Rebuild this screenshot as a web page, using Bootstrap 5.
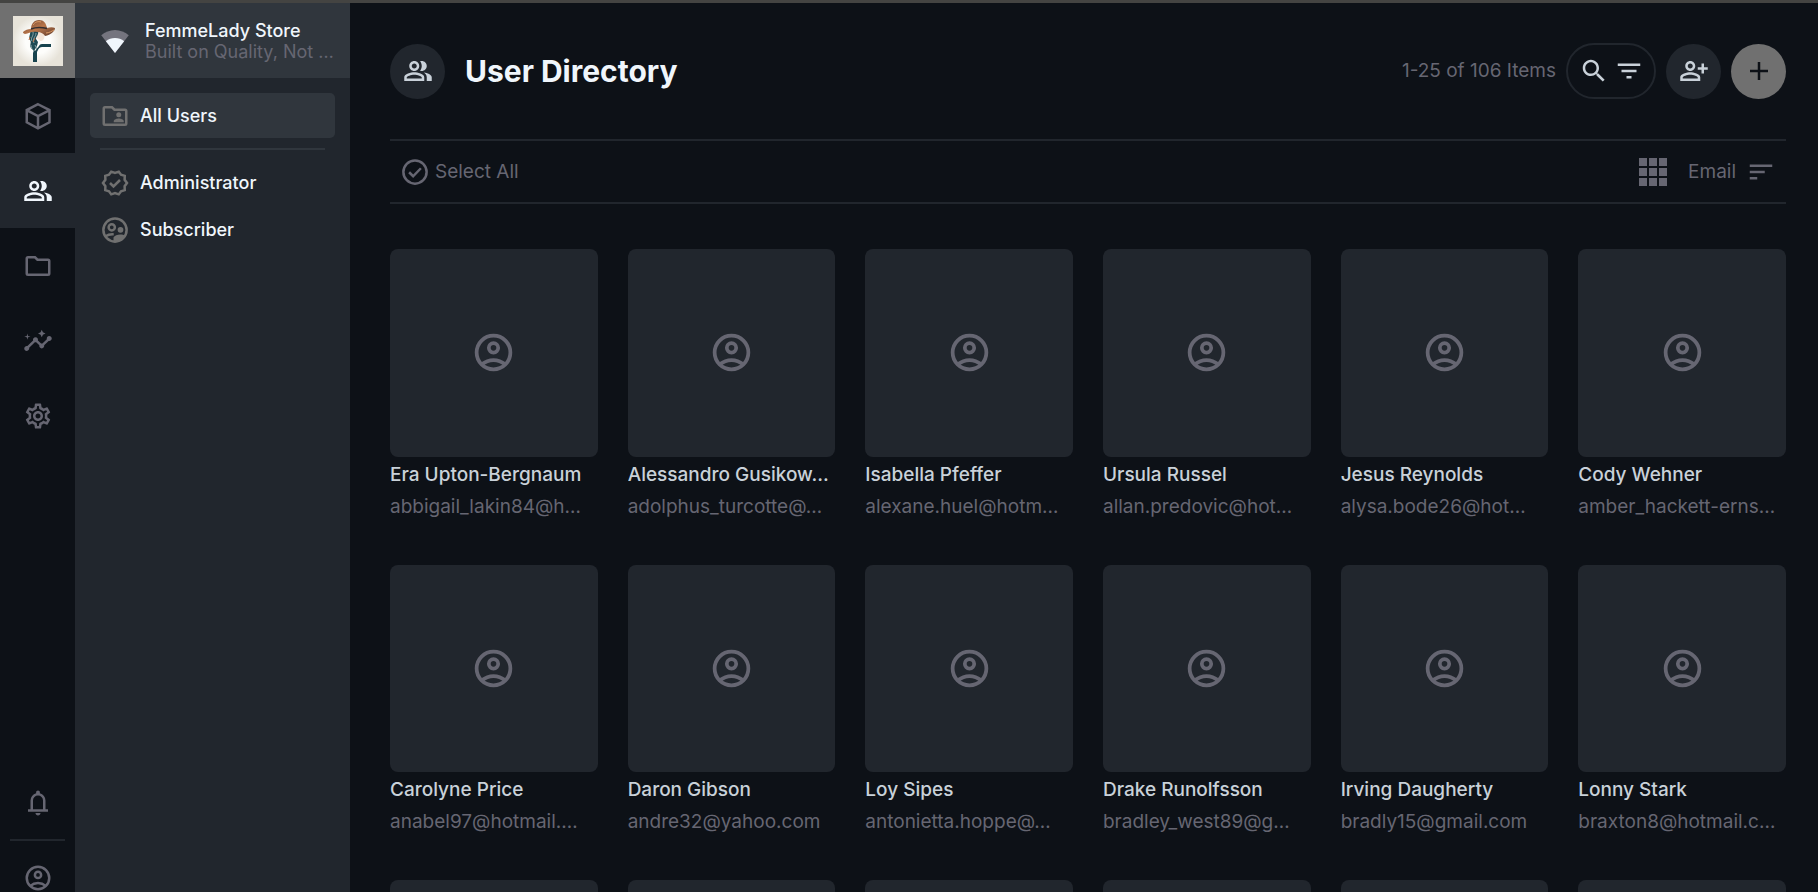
<!DOCTYPE html>
<html lang="en" data-bs-theme="dark">
<head>
<meta charset="utf-8">
<meta name="viewport" content="width=device-width, initial-scale=1">
<title>User Directory</title>
<link href="https://cdn.jsdelivr.net/npm/bootstrap@5.3.0/dist/css/bootstrap.min.css" rel="stylesheet">
<style>
:root { --page: #0d1117; --panel: #21262d; --raised: #30363d; --dim: #666672; --warm: #707070; --ink: #f0f6fc; --soft: #c9d1d9; }
body { background: var(--page); color: var(--soft); font-family: Inter, "Liberation Sans", sans-serif; font-size: 19px; line-height: 24px; border-top: 3px solid #444442; }
.ico { width: 30px; height: 30px; fill: currentColor; flex: none; display: block; }
.ln { fill: none; stroke: currentColor; stroke-width: 2; }
.bare { background: none; border: 0; padding: 0; color: inherit; }
.dim { color: var(--dim); }
.modules { width: 75px; background: var(--page); }
.module { height: 75px; color: var(--dim); }
.module.current { background: var(--panel); color: var(--ink); }
.module.brand { background: var(--warm); }
.module.account { height: 52px; padding-top: 23px; overflow: hidden; }
.module-rule { height: 2px; background: var(--panel); margin: -1px 10px; }
.sidenav { width: 275px; background: var(--panel); }
.project { height: 75px; background: var(--raised); padding: 0 15px 0 25px; gap: 15px; }
.project-name { color: var(--ink); font-weight: 500; line-height: 21px; font-size: 18px; }
.tagline { color: var(--dim); line-height: 21px; font-size: 18px; }
.side-list { padding: 15px; }
.side-item { height: 45px; border-radius: 5px; padding: 0 10px; gap: 10px; color: var(--ink); font-weight: 500; font-size: 18px; margin-bottom: 2px; }
.side-item svg { color: var(--warm); }
.side-item.current { background: var(--raised); margin-bottom: 0; }
.side-rule { height: 2px; background: var(--raised); margin: 10px; }
.content { padding: 40px 32px 0 40px; }
.round { width: 55px; height: 55px; border-radius: 50%; background: var(--panel); color: var(--soft); }
.round.add { background: var(--warm); color: var(--page); }
.title { font-size: 30px; font-weight: 700; line-height: 38px; color: var(--ink); }
.actions { gap: 10px; }
.search-pill { height: 56px; border: 2px solid var(--panel); border-radius: 28px; padding: 0 10px 0 11px; gap: 5px; }
.tools { height: 65px; border-top: 2px solid var(--panel); border-bottom: 2px solid var(--panel); margin: 40px 0 45px; padding: 0 10px; }
.select-all { gap: 5px; }
.sort { gap: 10px; }
.directory { --bs-gutter-x: 30px; }
.directory > .col { margin-bottom: 42px; }
.tile { aspect-ratio: 1; background: var(--panel); border-radius: 8px; color: var(--dim); margin-bottom: 2px; }
.tile svg { width: 45px; height: 45px; }
.person { line-height: 32px; white-space: nowrap; overflow: hidden; }
.person.who { color: var(--soft); font-weight: 500; }
</style>
</head>
<body class="vh-100 overflow-hidden d-flex">
<svg class="d-none" aria-hidden="true">
  <symbol id="i-account" viewBox="0 0 24 24"><g class="ln"><circle cx="12" cy="12" r="9"/><circle cx="12" cy="9.500" r="2.500"/><path d="M5.800 18.300C7.600 16.800 9.700 16 12 16s4.400.8 6.200 2.300"/></g></symbol>
  <symbol id="i-people" viewBox="0 0 24 24"><path d="M16.670 13.130C18.040 14.060 19 15.320 19 17v3h4v-3c0-2.180-3.570-3.470-6.330-3.870zM15 12c2.210 0 4-1.790 4-4s-1.790-4-4-4c-.47 0-.91.1-1.330.24C14.500 5.270 15 6.580 15 8s-.5 2.730-1.330 3.760c.42.14.86.24 1.330.24z"/><path fill-rule="evenodd" d="M9 12c2.210 0 4-1.790 4-4s-1.790-4-4-4-4 1.790-4 4 1.790 4 4 4zm0-6c1.100 0 2 .9 2 2s-.9 2-2 2-2-.9-2-2 .9-2 2-2zM9 13c-2.670 0-8 1.340-8 4v3h16v-3c0-2.660-5.330-4-8-4zm6 5H3v-.99C3.200 16.290 6.300 15 9 15s5.800 1.290 6 2v1z"/></symbol>
</svg>

<nav class="modules d-flex flex-column flex-shrink-0" aria-label="Modules">
  <a href="#" class="module brand d-flex align-items-center justify-content-center" aria-label="Store">
    <svg width="50" height="50" viewBox="0 0 50 50">
      <defs><radialGradient id="paper"><stop offset=".5" stop-color="#fdfdfb"/><stop offset="1" stop-color="#e7e3d9"/></radialGradient>
      <linearGradient id="felt" x2="1" y2="1"><stop stop-color="#6b4432"/><stop offset=".5" stop-color="#b9764a"/><stop offset="1" stop-color="#5d3829"/></linearGradient></defs>
      <rect width="50" height="50" fill="url(#paper)"/>
      <path fill="#f4e5d8" d="M24 15l8 1c0 3-1 4-.6 6-.8 2-2 3-4 3l-4-3z"/>
      <path fill="#1e4a54" d="M16 15l9 0c1 4-2 5-2 8l2 3-1 4-3 5-3-3c-2-3 1-5-1-8s1-6 0-9z"/>
      <path fill="none" stroke="#88a5a8" stroke-width="1" d="M20 16c1 4-3 6-1 9M23 17c0 4-4 5-2 10M18 29c0 3 1 4 3 6M22 29l2 4"/>
      <path fill="none" stroke="#ba754c" d="M17 21l-1 3M22 22l-2 4"/>
      <path fill="#17434e" d="M20 37l1-3 1 1 4-5c1-2 2-2 5-2h7v3h-9c-3 0-4 3-5 5v10h-4z"/>
      <path fill="url(#felt)" d="M10 16c2-2 5-3 8-3 0-5 3-9 8-9 5 0 7 3 8 8 3-1 6-1 8 0 0 3-4 7-10 8-1-2-4-4-8-4-6-1-8 2-12 2-2-1-2-1-2-2z"/>
      <path fill="none" stroke="#332e30" stroke-width="1.500" d="M18 13c5-2 10-2 16-.5"/>
      <path fill="none" stroke="#df9c65" d="M33 17c3 0 6-2 8-3M20 9c2-3 5-4 8-3"/>
    </svg>
  </a>
  <a href="#" class="module d-flex align-items-center justify-content-center" aria-label="Content"><svg class="ico" viewBox="0 0 24 24"><path class="ln" d="M12 2.600 21.200 7.300V17L12 21.800 3 17V7.300zM3.300 7.500 12 12l9-4.500M12 12v9.500"/></svg></a>
  <a href="#" class="module current d-flex align-items-center justify-content-center" aria-label="User Directory" aria-current="page"><svg class="ico"><use href="#i-people"/></svg></a>
  <a href="#" class="module d-flex align-items-center justify-content-center" aria-label="Files"><svg class="ico" viewBox="0 0 24 24"><path class="ln" d="M3 6v12q0 1 1 1h16q1 0 1-1V8q0-1-1-1h-8.400l-2-2H4q-1 0-1 1z"/></svg></a>
  <a href="#" class="module d-flex align-items-center justify-content-center" aria-label="Insights"><svg class="ico" viewBox="0 0 24 24"><path d="M21 8c-1.450 0-2.260 1.440-1.930 2.510l-3.550 3.560c-.3-.09-.74-.09-1.040 0l-2.550-2.550C12.270 10.450 11.460 9 10 9c-1.450 0-2.270 1.440-1.930 2.520l-4.560 4.550C2.440 15.740 1 16.550 1 18c0 1.100.9 2 2 2 1.450 0 2.260-1.440 1.930-2.510l4.550-4.560c.3.09.74.09 1.040 0l2.550 2.550C12.730 16.550 13.540 18 15 18c1.450 0 2.270-1.440 1.930-2.520l3.560-3.550C21.560 12.260 23 11.450 23 10c0-1.100-.9-2-2-2zM15 9l.94-2.070L18 6l-2.060-.93L15 3l-.92 2.070L12 6l2.080.93zM3.500 11L4 9l2-.5L4 8l-.5-2L3 8l-2 .5L3 9z"/></svg></a>
  <a href="#" class="module d-flex align-items-center justify-content-center" aria-label="Settings"><svg class="ico" viewBox="0 0 24 24"><path d="M19.430 12.980c.04-.32.07-.64.07-.98 0-.34-.03-.66-.07-.98l2.110-1.650c.19-.15.24-.42.12-.64l-2-3.460c-.09-.16-.26-.25-.44-.25-.06 0-.12.01-.17.03l-2.490 1c-.52-.4-1.080-.73-1.690-.98l-.38-2.650C14.460 2.180 14.250 2 14 2h-4c-.25 0-.46.18-.49.42l-.38 2.650c-.61.25-1.170.59-1.690.98l-2.490-1c-.06-.02-.12-.03-.18-.03-.17 0-.34.09-.43.25l-2 3.460c-.13.22-.07.49.12.64l2.110 1.650c-.04.32-.07.65-.07.98 0 .33.03.66.07.98l-2.110 1.650c-.19.15-.24.42-.12.64l2 3.460c.09.16.26.25.44.25.06 0 .12-.01.17-.03l2.490-1c.52.4 1.080.73 1.690.98l.38 2.650c.03.24.24.42.49.42h4c.25 0 .46-.18.49-.42l.38-2.650c.61-.25 1.170-.59 1.690-.98l2.490 1c.06.02.12.03.18.03.17 0 .34-.09.43-.25l2-3.460c.12-.22.07-.49-.12-.64l-2.110-1.650zm-1.980-1.710c.04.31.05.52.05.73 0 .21-.02.43-.05.73l-.14 1.130.89.7 1.080.84-.7 1.210-1.270-.51-1.040-.42-.9.68c-.43.32-.84.56-1.250.73l-1.060.43-.16 1.130-.2 1.350h-1.400l-.19-1.350-.16-1.130-1.060-.43c-.43-.18-.83-.41-1.230-.71l-.91-.7-1.060.43-1.270.51-.7-1.210 1.080-.84.89-.7-.14-1.130c-.03-.31-.05-.54-.05-.74s.02-.43.05-.73l.14-1.130-.89-.7-1.080-.84.7-1.210 1.270.51 1.040.42.9-.68c.43-.32.84-.56 1.250-.73l1.060-.43.16-1.130.2-1.350h1.390l.19 1.350.16 1.130 1.060.43c.43.18.83.41 1.230.71l.91.7 1.060-.43 1.270-.51.7 1.210-1.070.85-.89.7.14 1.130zM12 8c-2.210 0-4 1.790-4 4s1.790 4 4 4 4-1.790 4-4-1.790-4-4-4zm0 6c-1.100 0-2-.9-2-2s.9-2 2-2 2 .9 2 2-.9 2-2 2z"/></svg></a>
  <a href="#" class="module mt-auto flex-shrink-0 d-flex align-items-center justify-content-center" aria-label="Notifications"><svg class="ico" viewBox="0 0 24 24"><path fill-rule="evenodd" d="M4 19v-2h2v-7q0-2.075 1.250-3.688T10.500 4.200v-.7q0-.625.438-1.062T12 2t1.063.438T13.500 3.500v.7q2 .5 3.250 2.113T18 10v7h2v2zm8 3q-.825 0-1.412-.587T10 20h4q0 .825-.587 1.413T12 22m-4-5h8v-7q0-1.650-1.175-2.825T12 6T9.175 7.175T8 10z"/></svg></a>
  <div class="module-rule flex-shrink-0"></div>
  <a href="#" class="module account flex-shrink-0 d-flex justify-content-center" aria-label="Account"><svg class="ico"><use href="#i-account"/></svg></a>
</nav>

<aside class="sidenav flex-shrink-0">
  <div class="project d-flex align-items-center">
    <svg class="ico" viewBox="0 0 24 24"><path fill="#74747e" d="M12 21.500 1 7.300C4 4.900 7.900 3.200 12 3.200S20 4.900 23 7.300z"/><path fill="#f0f6fc" d="M12 21.500 4.700 12.100c2-1.600 4.600-2.500 7.300-2.500s5.300.9 7.300 2.500z"/></svg>
    <div class="text-nowrap overflow-hidden"><div class="project-name">FemmeLady Store</div><div class="tagline">Built on Quality, Not …</div></div>
  </div>
  <nav class="side-list" aria-label="Roles">
    <a href="#" class="side-item current d-flex align-items-center text-decoration-none"><svg class="ico" viewBox="0 0 24 24"><path class="ln" d="M3 6v12q0 1 1 1h16q1 0 1-1V8q0-1-1-1h-8.400l-2-2H4q-1 0-1 1z"/><circle cx="15" cy="11" r="2"/><path d="M11 17v-1c0-1.330 2.670-2 4-2s4 .67 4 2v1z"/></svg>All Users</a>
    <div class="side-rule"></div>
    <a href="#" class="side-item d-flex align-items-center text-decoration-none"><svg class="ico" viewBox="0 0 24 24"><path class="ln" d="M21.600 12 19.700 14.500 19.800 17.700 16.800 18.600 15 21.100 12 20.100 9 21.100 7.200 18.600 4.200 17.700 4.300 14.500 2.400 12 4.300 9.500 4.200 6.300 7.200 5.400 9 2.900 12 3.900 15 2.900 16.800 5.400 19.800 6.300 19.700 9.500zM8 12l2.800 2.800L16 9.600"/></svg>Administrator</a>
    <a href="#" class="side-item d-flex align-items-center text-decoration-none"><svg class="ico" viewBox="0 0 24 24"><g class="ln"><circle cx="12" cy="12" r="9.300"/><circle cx="9.400" cy="9.800" r="2.500"/><path d="M4.500 17c1.700-1.200 3.700-1.700 6.500-1.500"/></g><circle cx="16.400" cy="11.800" r="2.300"/><path d="M20.400 16.500c-3-1.600-8.300-1.200-9.600 1.500v3.500c4 .6 7.500-1.500 9.600-5z"/></svg>Subscriber</a>
  </nav>
</aside>

<main class="content flex-grow-1 overflow-hidden">
  <header class="d-flex align-items-center">
    <span class="round d-flex align-items-center justify-content-center flex-shrink-0"><svg class="ico"><use href="#i-people"/></svg></span>
    <h1 class="title mb-0 ms-3 ps-1">User Directory</h1>
    <div class="actions d-flex align-items-center ms-auto text-nowrap">
      <span class="dim">1-25 of 106 Items</span>
      <div class="search-pill d-flex align-items-center" role="search">
        <button type="button" class="bare" aria-label="Search"><svg class="ico" viewBox="0 0 24 24"><path d="M15.500 14h-.79l-.28-.27C15.410 12.590 16 11.110 16 9.500 16 5.910 13.090 3 9.500 3S3 5.910 3 9.500 5.910 16 9.500 16c1.610 0 3.090-.59 4.230-1.570l.27.28v.79l5 4.990L20.490 19l-4.990-5zm-6 0C7.010 14 5 11.990 5 9.500S7.010 5 9.500 5 14 7.010 14 9.500 11.990 14 9.500 14z"/></svg></button>
        <button type="button" class="bare" aria-label="Filter"><svg class="ico" viewBox="0 0 24 24"><path d="M10 18h4v-2h-4v2zM3 6v2h18V6H3zm3 7h12v-2H6v2z"/></svg></button>
      </div>
      <button type="button" class="bare round d-flex align-items-center justify-content-center" aria-label="Invite users"><svg class="ico" viewBox="0 0 24 24"><path fill-rule="evenodd" d="M9 12c2.210 0 4-1.790 4-4s-1.790-4-4-4-4 1.790-4 4 1.790 4 4 4zm0-6c1.100 0 2 .9 2 2s-.9 2-2 2-2-.9-2-2 .9-2 2-2zM9 13c-2.670 0-8 1.340-8 4v3h16v-3c0-2.660-5.330-4-8-4zm6 5H3v-.99C3.200 16.290 6.300 15 9 15s5.800 1.290 6 2v1z"/><path d="M20 14v-3h3V9h-3V6h-2v3h-3v2h3v3z"/></svg></button>
      <button type="button" class="bare round add d-flex align-items-center justify-content-center" aria-label="Create user"><svg class="ico" viewBox="0 0 24 24"><path class="ln" d="M12 4.800v14.400M4.800 12h14.400"/></svg></button>
    </div>
  </header>

  <div class="tools dim d-flex align-items-center">
    <button type="button" class="select-all bare d-flex align-items-center"><svg class="ico" viewBox="0 0 24 24"><g class="ln"><circle cx="12" cy="12" r="9.300"/><path d="M7.300 12.200l3.200 3.200 6.200-6.400"/></g></svg>Select All</button>
    <button type="button" class="bare ms-auto me-3 pe-1" aria-label="Card size"><svg class="ico" viewBox="0 0 30 30"><path d="M1 1h8v8H1zM11 1h8v8h-8zM21 1h8v8h-8zM1 11h8v8H1zM11 11h8v8h-8zM21 11h8v8h-8zM1 21h8v8H1zM11 21h8v8h-8zM21 21h8v8h-8z"/></svg></button>
    <button type="button" class="sort bare d-flex align-items-center">Email<svg class="ico" viewBox="0 0 24 24"><path d="M3 18h6v-2H3v2zM3 6v2h18V6H3zm0 7h12v-2H3v2z"/></svg></button>
  </div>

  <div class="row row-cols-2 row-cols-md-4 row-cols-xl-6 directory">
    <div class="col"><div class="tile d-flex align-items-center justify-content-center"><svg class="ico"><use href="#i-account"/></svg></div><div class="person who">Era Upton-Bergnaum</div><div class="person dim">abbigail_lakin84@h…</div></div>
    <div class="col"><div class="tile d-flex align-items-center justify-content-center"><svg class="ico"><use href="#i-account"/></svg></div><div class="person who">Alessandro Gusikow…</div><div class="person dim">adolphus_turcotte@…</div></div>
    <div class="col"><div class="tile d-flex align-items-center justify-content-center"><svg class="ico"><use href="#i-account"/></svg></div><div class="person who">Isabella Pfeffer</div><div class="person dim">alexane.huel@hotm…</div></div>
    <div class="col"><div class="tile d-flex align-items-center justify-content-center"><svg class="ico"><use href="#i-account"/></svg></div><div class="person who">Ursula Russel</div><div class="person dim">allan.predovic@hot…</div></div>
    <div class="col"><div class="tile d-flex align-items-center justify-content-center"><svg class="ico"><use href="#i-account"/></svg></div><div class="person who">Jesus Reynolds</div><div class="person dim">alysa.bode26@hot…</div></div>
    <div class="col"><div class="tile d-flex align-items-center justify-content-center"><svg class="ico"><use href="#i-account"/></svg></div><div class="person who">Cody Wehner</div><div class="person dim">amber_hackett-erns…</div></div>
    <div class="col"><div class="tile d-flex align-items-center justify-content-center"><svg class="ico"><use href="#i-account"/></svg></div><div class="person who">Carolyne Price</div><div class="person dim">anabel97@hotmail.…</div></div>
    <div class="col"><div class="tile d-flex align-items-center justify-content-center"><svg class="ico"><use href="#i-account"/></svg></div><div class="person who">Daron Gibson</div><div class="person dim">andre32@yahoo.com</div></div>
    <div class="col"><div class="tile d-flex align-items-center justify-content-center"><svg class="ico"><use href="#i-account"/></svg></div><div class="person who">Loy Sipes</div><div class="person dim">antonietta.hoppe@…</div></div>
    <div class="col"><div class="tile d-flex align-items-center justify-content-center"><svg class="ico"><use href="#i-account"/></svg></div><div class="person who">Drake Runolfsson</div><div class="person dim">bradley_west89@g…</div></div>
    <div class="col"><div class="tile d-flex align-items-center justify-content-center"><svg class="ico"><use href="#i-account"/></svg></div><div class="person who">Irving Daugherty</div><div class="person dim">bradly15@gmail.com</div></div>
    <div class="col"><div class="tile d-flex align-items-center justify-content-center"><svg class="ico"><use href="#i-account"/></svg></div><div class="person who">Lonny Stark</div><div class="person dim">braxton8@hotmail.c…</div></div>
    <div class="col"><div class="tile"></div></div>
    <div class="col"><div class="tile"></div></div>
    <div class="col"><div class="tile"></div></div>
    <div class="col"><div class="tile"></div></div>
    <div class="col"><div class="tile"></div></div>
    <div class="col"><div class="tile"></div></div>
  </div>
</main>
<script src="https://cdn.jsdelivr.net/npm/bootstrap@5.3.0/dist/js/bootstrap.bundle.min.js"></script>
</body>
</html>
